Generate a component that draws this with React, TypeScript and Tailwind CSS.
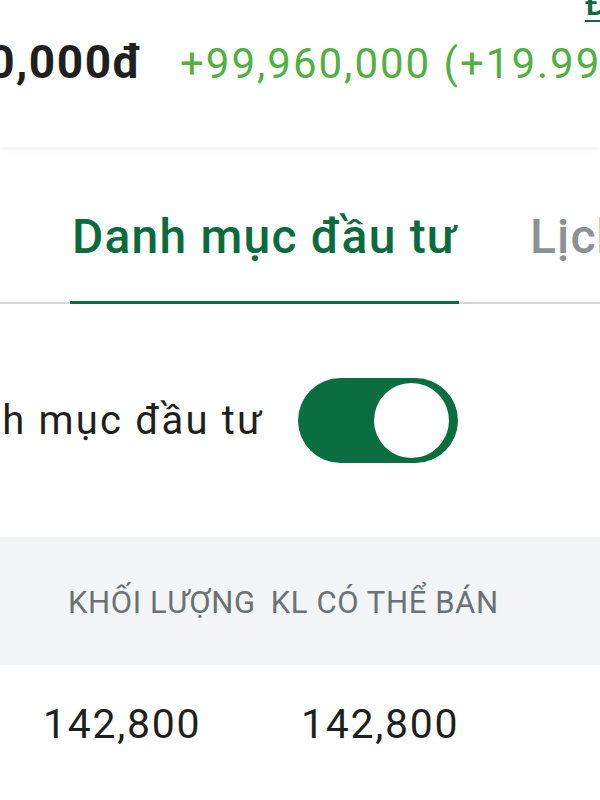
export default function App() {
  return (
    <div className="w-[600px] h-[800px] overflow-hidden bg-white font-['Roboto','Noto_Sans',sans-serif] text-[#1f1f1f]">
      {/* summary card */}
      <div className="h-[147px] bg-white shadow-[0_3px_5px_rgba(0,0,0,0.05)] relative z-10">
        <div className="flex justify-end h-[30px] overflow-hidden">
          <span className="w-[15px] shrink-0 overflow-hidden whitespace-nowrap text-[#0b6b3f] text-[34px] leading-[30px] font-medium underline underline-offset-[5px] decoration-2 -mt-[12px]">
            Đổi
          </span>
        </div>
        <div className="flex items-center whitespace-nowrap">
          <div className="w-[143px] flex justify-end overflow-hidden shrink-0">
            <span className="text-[46px] leading-[60px] font-bold tracking-[1.5px] text-[#1f1f1f]">599,960,000đ</span>
          </div>
          <span className="ml-[37px] text-[42px] leading-[60px] tracking-[2px] text-[#52b043] mt-[4px]">+99,960,000 (+19.99%)</span>
        </div>
      </div>

      {/* tabs */}
      <div className="mt-[51px] border-b-2 border-[#d6d6d6] flex whitespace-nowrap">
        <div className="ml-[70px] w-[389px] shrink-0 -mb-[2px] border-b-[3px] border-[#0b6b3f] pl-[2px] pt-[4px] pb-[29px]">
          <span className="text-[48px] leading-[70px] font-medium tracking-[1.2px] text-[#0b6b3f]">Danh mục đầu tư</span>
        </div>
        <div className="ml-[71px] shrink-0 pt-[4px]">
          <span className="text-[48px] leading-[70px] font-medium tracking-[1.2px] text-[#8e9194]">Lịch sử</span>
        </div>
      </div>

      {/* switch row */}
      <div className="mt-[74px] flex items-center whitespace-nowrap">
        <div className="w-[264px] flex justify-end overflow-hidden shrink-0">
          <span className="text-[40px] leading-[60px] tracking-[2.2px] text-[#1f1f1f]">Danh mục đầu tư</span>
        </div>
        <div className="ml-[34px] w-[160px] h-[85px] rounded-full bg-[#0b6e41] flex items-center justify-end pr-[9px] shrink-0">
          <div className="w-[75px] h-[75px] rounded-full bg-white" />
        </div>
      </div>

      {/* table header */}
      <div className="mt-[74px] h-[128px] bg-[#f2f4f5] flex items-center whitespace-nowrap text-[31px] tracking-[0.6px] text-[#6b7274] pt-[4px]">
        <span className="ml-[68px]">KHỐI LƯỢNG</span>
        <span className="ml-[15px]">KL CÓ THỂ BÁN</span>
      </div>

      {/* table row */}
      <div className="h-[120px] flex items-center whitespace-nowrap text-[41px] tracking-[1.7px] text-[#1f1f1f]">
        <span className="ml-[43px] w-[258px] shrink-0">142,800</span>
        <span>142,800</span>
      </div>
    </div>
  );
}
